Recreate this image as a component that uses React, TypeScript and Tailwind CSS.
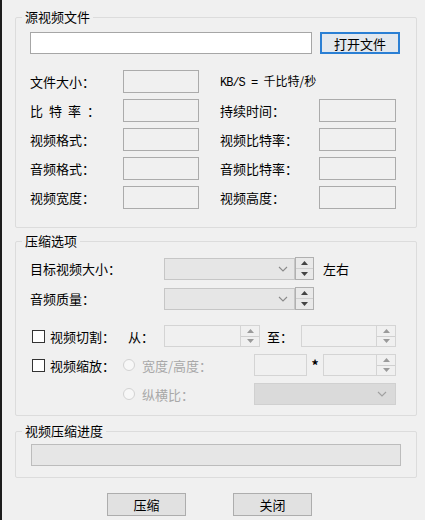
import type { ReactNode } from 'react';

const Up = () => (
  <svg width="7" height="4" viewBox="0 0 7 4">
    <path d="M3.5 0L7 4H0z" fill="currentColor" />
  </svg>
);

const Down = () => (
  <svg width="7" height="4" viewBox="0 0 7 4">
    <path d="M0 0h7L3.5 4z" fill="currentColor" />
  </svg>
);

const Chevron = ({ className }: { className?: string }) => (
  <svg width="10" height="6" viewBox="0 0 10 6" className={className}>
    <path d="M1 1l4 4 4-4" fill="none" stroke="currentColor" strokeWidth="1.1" />
  </svg>
);

// spin arrows, either standalone or docked inside an edit
const SpinArrows = ({ className }: { className: string }) => (
  <div className={`flex flex-col ${className}`}>
    <div className="flex flex-1 items-center justify-center border-b border-[#cfcfcf]">
      <Up />
    </div>
    <div className="flex flex-1 items-center justify-center">
      <Down />
    </div>
  </div>
);

const Field = ({ className }: { className: string }) => (
  <div className={`h-[23px] border border-[#ababab] bg-[#f0f0f0] ${className}`} />
);

const Label = ({ children, className = '' }: { children: ReactNode; className?: string }) => (
  <span className={`shrink-0 text-[13px] leading-[15px] whitespace-nowrap ${className}`}>{children}</span>
);

const Checkbox = () => <span className="ml-[16px] size-[13px] shrink-0 border border-[#333] bg-white" />;

const Radio = () => (
  <span className="size-[12px] shrink-0 rounded-full border border-[#d2d2d2] bg-[#f7f7f7]" />
);

const Group = ({ title, className, children }: { title: string; className: string; children: ReactNode }) => (
  <fieldset className={`ml-[13px] w-[402px] rounded-[2px] border border-[#dcdcdc] ${className}`}>
    <legend className="ml-[6px] px-[3px] text-[13px] leading-[14px]">{title}</legend>
    {children}
  </fieldset>
);

const InfoRow = ({
  left,
  right,
  leftClass = '',
}: {
  left: string;
  right?: string;
  leftClass?: string;
}) => (
  <div className="flex h-[23px] items-center pl-[14px]">
    <Label className={`w-[93px] ${leftClass}`}>{left}</Label>
    <Field className="w-[76px]" />
    <span className="w-[21px]" />
    {right ? (
      <>
        <Label className="w-[99px]">{right}</Label>
        <Field className="w-[77px]" />
      </>
    ) : (
      <span className="text-[12px] leading-[15px]">
        <span className="font-['Liberation_Mono',monospace] text-[12px] tracking-[-1px]">KB/S = </span>
        千比特/秒
      </span>
    )}
  </div>
);

export default function App() {
  return (
    <div className="h-[520px] w-[425px] overflow-hidden border-l-2 border-[#1c1c1c] bg-[#f0f0f0] font-['Noto_Sans_CJK_SC',sans-serif] text-black">
      <div className="pt-[10px]">
        <Group title="源视频文件" className="h-[218px]">
          <div className="mt-[8px] flex items-center pl-[14px]">
            <div className="h-[22px] w-[282px] border border-[#a6a6a6] bg-white" />
            <button className="ml-[8px] h-[22px] w-[80px] border-2 border-[#2a7fd4] bg-[#e3e8ee] text-[13px] leading-[15px]">
              打开文件
            </button>
          </div>
          <div className="mt-[16px] flex flex-col gap-[6px]">
            <InfoRow left="文件大小：" />
            <InfoRow left="比特率：" leftClass="tracking-[6px]" right="持续时间：" />
            <InfoRow left="视频格式：" right="视频比特率：" />
            <InfoRow left="音频格式：" right="音频比特率：" />
            <InfoRow left="视频宽度：" right="视频高度：" />
          </div>
        </Group>

        <Group title="压缩选项" className="mt-[6px] h-[182px]">
          <div className="mt-[9px] flex h-[23px] items-center pl-[14px]">
            <Label className="w-[134px]">目标视频大小：</Label>
            <div className="flex h-[22px] w-[131px] items-center justify-end border border-[#c6c6c6] bg-[#e6e6e6] pr-[6px] text-[#8a8a8a]">
              <Chevron />
            </div>
            <SpinArrows className="h-[23px] w-[19px] border border-[#b0b0b0] bg-[#e9e9e9] text-[#444]" />
            <Label className="ml-[9px]">左右</Label>
          </div>
          <div className="mt-[7px] flex h-[23px] items-center pl-[14px]">
            <Label className="w-[134px]">音频质量：</Label>
            <div className="flex h-[22px] w-[131px] items-center justify-end border border-[#c6c6c6] bg-[#e6e6e6] pr-[6px] text-[#8a8a8a]">
              <Chevron />
            </div>
            <SpinArrows className="h-[23px] w-[19px] border border-[#b0b0b0] bg-[#e9e9e9] text-[#444]" />
          </div>

          <div className="mt-[15px] flex h-[22px] items-center">
            <Checkbox />
            <Label className="ml-[5px] w-[78px]">视频切割：</Label>
            <Label className="w-[36px]">从：</Label>
            <div className="flex h-[22px] w-[96px] justify-end border border-[#d4d4d4] bg-[#f0f0f0]">
              <SpinArrows className="w-[19px] border-l border-[#d4d4d4] text-[#9a9a9a]" />
            </div>
            <Label className="ml-[7px] w-[34px]">至：</Label>
            <div className="flex h-[22px] w-[95px] justify-end border border-[#d4d4d4] bg-[#f0f0f0]">
              <SpinArrows className="w-[19px] border-l border-[#d4d4d4] text-[#9a9a9a]" />
            </div>
          </div>

          <div className="mt-[7px] flex h-[22px] items-center">
            <Checkbox />
            <Label className="ml-[5px] w-[73px]">视频缩放：</Label>
            <Radio />
            <Label className="ml-[7px] w-[112px] text-[#a8a8a8]">宽度/高度：</Label>
            <div className="h-[22px] w-[53px] border border-[#d4d4d4] bg-[#f0f0f0]" />
            <span className="w-[16px] text-center text-[14px] leading-[15px] font-bold">*</span>
            <div className="flex h-[22px] w-[73px] justify-end border border-[#d4d4d4] bg-[#f0f0f0]">
              <SpinArrows className="w-[19px] border-l border-[#d4d4d4] text-[#9a9a9a]" />
            </div>
          </div>

          <div className="mt-[7px] flex h-[22px] items-center pl-[107px]">
            <Radio />
            <Label className="ml-[7px] w-[112px] text-[#a8a8a8]">纵横比：</Label>
            <div className="flex h-[22px] w-[142px] items-center justify-end border border-[#d0d0d0] bg-[#dadada] pr-[8px] text-[#a0a0a0]">
              <Chevron />
            </div>
          </div>
        </Group>

        <Group title="视频压缩进度" className="mt-[8px] h-[54px]">
          <div className="mt-[6px] ml-[15px] h-[22px] w-[370px] border border-[#bcbcbc] bg-[#e6e6e6]" />
        </Group>

        <div className="mt-[15px] flex pl-[105px]">
          <button className="h-[23px] w-[79px] border border-[#adadad] bg-[#e1e1e1] text-[13px] leading-[15px]">
            压缩
          </button>
          <button className="ml-[47px] h-[23px] w-[79px] border border-[#adadad] bg-[#e1e1e1] text-[13px] leading-[15px]">
            关闭
          </button>
        </div>
      </div>
    </div>
  );
}
